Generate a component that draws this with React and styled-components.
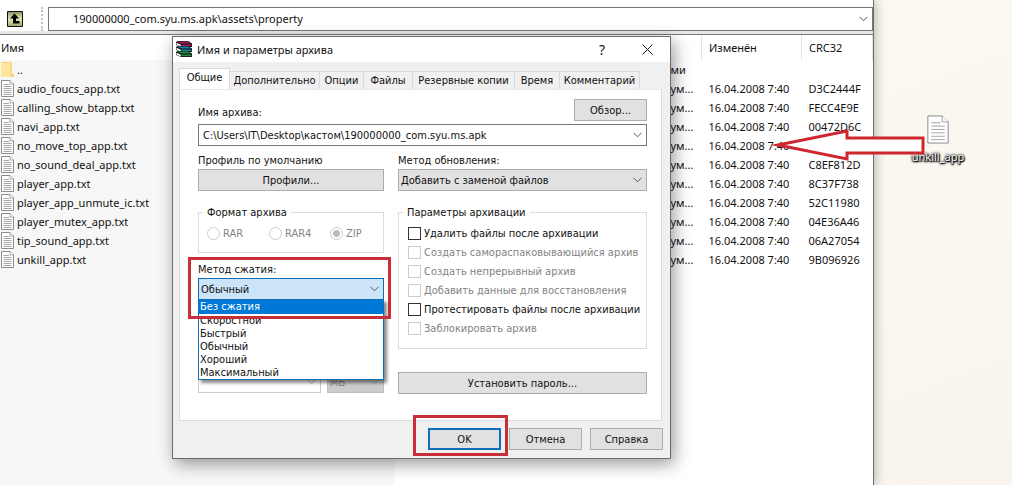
import React, { useState } from 'react';
import styled, { createGlobalStyle, css } from 'styled-components';

const GlobalStyle = createGlobalStyle`
  * {
    box-sizing: border-box;
  }
  body {
    margin: 0;
    color: #111;
    font-family: 'Noto Sans', 'Open Sans', sans-serif;
    font-size: 11px;
    line-height: 19px;
  }
  button,
  input,
  select {
    margin: 0;
    color: inherit;
    font: inherit;
    border-radius: 0;
  }
`;

const Desktop = styled.main`
  position: relative;
  display: grid;
  grid-template-columns: minmax(0, 1fr) 138px;
  min-height: 100vh;
  overflow: hidden;
  background: linear-gradient(160deg, #fdf9f4, #f9f5ee);
`;

const ArchiveWindow = styled.section`
  display: flex;
  flex-direction: column;
  min-width: 0;
  background: #fff;
  border-right: 1px solid #6e6e6e;
  box-shadow: 2px 0 10px rgba(0, 0, 0, 0.25);
`;

const Toolbar = styled.div`
  display: flex;
  align-items: center;
  height: 35px;
  padding-top: 3px;
  border-bottom: 1px solid #7a7a7a;
  background: linear-gradient(#fff 31px, #e4e8e6 31px);
`;

const UpButton = styled.button`
  display: flex;
  width: 16px;
  height: 16px;
  margin-left: 7px;
  padding: 0;
  border: 0;
  background: none;
`;

const Grip = styled.span`
  height: 24px;
  margin: 0 5px 0 18px;
  border-left: 2px dotted #c4c4c4;
`;

const AddressBar = styled.div`
  display: flex;
  flex: 1;
  align-items: center;
  height: 24px;
  border: 1px solid #777;
  background: #fff;
`;

const AddressInput = styled.input`
  flex: 1;
  min-width: 0;
  padding: 0 0 0 24px;
  border: 0;
  background: none;
`;

const ChevronButton = styled.button`
  display: flex;
  align-items: center;
  justify-content: center;
  width: 17px;
  padding: 0;
  border: 0;
  background: none;
`;

const ListPane = styled.div`
  flex: 1;
  background: linear-gradient(to right, #f7f7f7 395px, #fff 395px);
`;

const FileTable = styled.table`
  width: 100%;
  table-layout: fixed;
  border-collapse: collapse;

  th {
    height: 25px;
    padding: 0 0 0 7px;
    background: #fff;
    border-right: 1px solid #e2e2e2;
    font-weight: 400;
    text-align: left;
  }
  th:first-child {
    padding-left: 1px;
  }
  td {
    height: 19px;
    padding: 0 0 0 7px;
    white-space: nowrap;
    overflow: hidden;
  }
  td:first-child {
    padding-left: 1px;
  }
  td:nth-child(3) {
    padding-left: 0;
  }
`;

const FileName = styled.span`
  display: flex;
  align-items: center;
  gap: 3px;
  height: 19px;
`;

const DesktopFile = styled.figure`
  display: flex;
  flex-direction: column;
  align-items: center;
  gap: 3px;
  margin: 115px 10px 0 0;
`;

const DesktopLabel = styled.figcaption`
  color: #fff;
  text-shadow: 0 0 2px #000, 1px 1px 1px #000, 0 0 3px #000, 0 1px 2px #000;
`;

const ArrowMark = styled.svg`
  position: absolute;
  top: 126px;
  right: 86px;
`;

const Dialog = styled.section`
  position: absolute;
  top: 36px;
  left: 172px;
  width: 499px;
  border: 1px solid #6b6b6b;
  background: #f0f0f0;
  box-shadow: 3px 5px 16px rgba(0, 0, 0, 0.4);
  font-family: 'DejaVu Sans Condensed', 'DejaVu Sans', sans-serif;
  font-size: 11px;
  line-height: 13px;
`;

const TitleBar = styled.header`
  display: flex;
  align-items: center;
  height: 25px;
  padding: 0 13px 1px 3px;
  background: #fff;
  font-family: 'Noto Sans', 'Open Sans', sans-serif;
`;

const Title = styled.h1`
  flex: 1;
  margin: 0 0 0 5px;
  font-size: 11px;
  font-weight: 400;
`;

const TitleButton = styled.button`
  display: flex;
  align-items: center;
  justify-content: center;
  width: 20px;
  height: 20px;
  margin-left: 25px;
  padding: 0;
  border: 0;
  background: none;
  font-size: 14px;
`;

const Tabs = styled.div`
  display: flex;
  align-items: flex-end;
  height: 27px;
  padding: 0 6px;
`;

const Tab = styled.button`
  flex: 0 0 ${props => props.$width};
  height: ${props => (props.$active ? '21px' : '18px')};
  padding: ${props => (props.$active ? '0 0 3px' : '0')};
  border: 1px solid #dadada;
  border-bottom: 0;
  border-left-width: ${props => (props.$active ? '1px' : '0')};
  background: ${props => (props.$active ? '#fff' : '#f0f0f0')};
  white-space: nowrap;
`;

const Page = styled.div`
  margin: 0 8px 0 6px;
  padding: 9px 14px 26px 18px;
  border: 1px solid #dcdcdc;
  border-top-color: #e8e8e8;
  background: #fff;
`;

const NameRow = styled.div`
  display: flex;
  align-items: flex-end;
  justify-content: space-between;
  margin-bottom: 3px;
`;

const PushButton = styled.button`
  width: ${props => props.$width || '73px'};
  height: 22px;
  padding: 0;
  border: ${props => (props.$primary ? '2px solid #0f6fb5' : '1px solid #adadad')};
  background: #e1e1e1;
`;

const ComboBox = styled.div`
  display: flex;
  height: 22px;
  border: 1px solid ${props => (props.$disabled ? '#ccc' : '#777')};
  background: #fff;
`;

const ComboInput = styled.input`
  flex: 1;
  min-width: 0;
  padding: 0 4px;
  border: 0;
  background: none;
`;

const Columns = styled.div`
  display: grid;
  grid-template-columns: 186px minmax(0, 1fr);
  column-gap: 14px;
  margin-top: 8px;
`;

const Column = styled.div`
  display: flex;
  flex-direction: column;
`;

const FieldLabel = styled.label`
  display: block;
  height: 13px;
  margin-bottom: 2px;
`;

const SelectWrap = styled.div`
  position: relative;
  flex: none;
  width: ${props => props.$width || '100%'};

  > svg {
    position: absolute;
    top: 8px;
    right: 5px;
    pointer-events: none;
  }
`;

const Select = styled.select`
  display: block;
  width: 100%;
  height: 22px;
  padding: 0 2px;
  appearance: none;
  border: 1px solid #adadad;
  background: #e1e1e1;
  opacity: 1;

  ${props =>
    props.$open &&
    css`
      border-color: #0f6fb5;
      background: #cce4f7;
    `}
  &:disabled {
    border-color: #bfbfbf;
    background: #ccc;
    color: #838383;
  }
`;

const Group = styled.fieldset`
  min-width: 0;
  height: ${props => props.$height};
  margin: 15px 0 0;
  padding: 0 8px;
  border: 1px solid #dcdcdc;

  legend {
    margin-left: -4px;
    padding: 0 4px;
  }
`;

const FormatRow = styled.div`
  display: grid;
  grid-template-columns: 62px 61px auto;
  padding-top: 7px;
`;

const Option = styled.label`
  display: flex;
  align-items: center;
  gap: 3px;
  height: ${props => props.$height || '14px'};
  color: ${props => (props.$disabled ? '#838383' : 'inherit')};
  white-space: nowrap;
`;

const Radio = styled.input`
  width: 13px;
  height: 13px;
  margin: 0;
  appearance: none;
  border: 1px solid #ccc;
  border-radius: 50%;
  background: ${props =>
    props.checked ? 'radial-gradient(circle, #bbb 3px, #fff 4px)' : '#fff'};
`;

const Checkbox = styled.input`
  flex: none;
  width: 13px;
  height: 13px;
  margin: 0;
  appearance: none;
  border: 1px solid #333;
  background: #fff;

  &:checked {
    background: #555;
    box-shadow: inset 0 0 0 2px #fff;
  }
  &:disabled {
    border-color: #ccc;
  }
`;

const OptionList = styled.div`
  padding: 5px 0 0 1px;
`;

const Compression = styled.div`
  position: relative;
  margin-top: 10px;
`;

const DropList = styled.ul`
  position: absolute;
  z-index: 1;
  top: 36px;
  left: 0;
  right: 0;
  margin: 0;
  padding: 0;
  border: 1px solid #0f6fb5;
  background: #fff;
  box-shadow: 3px 3px 3px rgba(0, 0, 0, 0.45);
  list-style: none;
`;

const DropItem = styled.li`
  height: 13px;
  padding-left: 1px;
  background: ${props => (props.$selected ? '#0078d7' : '#fff')};
  color: ${props => (props.$selected ? '#fff' : 'inherit')};

  &:first-child {
    height: 14px;
  }
`;

const RedFrame = styled.span`
  position: absolute;
  z-index: 2;
  inset: ${props => props.$inset};
  border: 3px solid #c62f37;
  pointer-events: none;
`;

const VolumeRow = styled.div`
  display: flex;
  gap: 6px;
  margin-top: 71px;

  > ${ComboBox} {
    flex: 1;
    min-width: 0;
  }
`;

const PasswordRow = styled.div`
  display: flex;
  margin-top: 23px;
`;

const Footer = styled.footer`
  display: flex;
  justify-content: flex-end;
  gap: 8px;
  padding: 7px 7px 8px;
`;

const OkWrap = styled.div`
  position: relative;
`;

const Chevron = ({ color = '#555' }) => (
  <svg width="9" height="6" viewBox="0 0 9 6" fill="none" stroke={color}>
    <path d="M0.5 0.8L4.5 4.8L8.5 0.8" />
  </svg>
);

const TextFileIcon = ({ width = 13, height = 17 }) => (
  <svg width={width} height={height} viewBox="0 0 13 17" fill="#fff" stroke="#8c8c8c">
    <path d="M0.5 0.5H9L12.5 4V16.5H0.5Z" strokeWidth={13 / width} />
    <path
      d="M9 0.5V4H12.5M2.5 4.5H8M2.5 6.5H10.5M2.5 8.5H10.5M2.5 10.5H10.5M2.5 12.5H10.5M2.5 14.5H10.5"
      strokeWidth={10 / width}
    />
  </svg>
);

const FolderIcon = () => (
  <svg width="13" height="17" viewBox="0 0 13 17">
    <path d="M0 1H11V12L13 13V16H0Z" fill="#f5d778" />
    <path d="M0 2H9.500V16H0Z" fill="#ffe69c" />
  </svg>
);

const UpIcon = () => (
  <svg width="16" height="16" viewBox="0 0 16 16">
    <defs>
      <linearGradient id="up-face" x1="0" y1="0" x2="0" y2="1">
        <stop offset="0" stopColor="#8e8e55" />
        <stop offset="0.5" stopColor="#e6e6bd" />
        <stop offset="1" stopColor="#a3a368" />
      </linearGradient>
    </defs>
    <path d="M0.5 0.5H15.5V15.5H0.5Z" fill="url(#up-face)" stroke="#111" />
    <path d="M7.500 2.500L3 7.500H6V12.500H12.500V10H9V7.500H12Z" fill="#000" />
  </svg>
);

const books = [
  { y: 0, color: '#a3195f' },
  { y: 5, color: '#187f9c' },
  { y: 10, color: '#1d8a46' },
];

const BooksIcon = () => (
  <svg width="16" height="16" viewBox="0 0 16 16">
    {books.map(book => (
      <g key={book.y} transform={`translate(0 ${book.y})`}>
        <path d="M0 1L2 0H12L16 2.500V6H5L0 4Z" fill="#111" />
        <path d="M1.500 1L3 0.500H12L15 2.500H5Z" fill={book.color} />
        <path d="M5.500 3.500H15.500V5.200H5.500Z" fill={book.color} />
        <path d="M0.500 1.800L4.800 3.700V5.500L0.500 3.700Z" fill="#fff" />
      </g>
    ))}
  </svg>
);

const files = [
  { name: 'audio_foucs_app.txt', crc: 'D3C2444F' },
  { name: 'calling_show_btapp.txt', crc: 'FECC4E9E' },
  { name: 'navi_app.txt', crc: '00472D6C' },
  { name: 'no_move_top_app.txt', crc: '' },
  { name: 'no_sound_deal_app.txt', crc: 'C8EF812D' },
  { name: 'player_app.txt', crc: '8C37F738' },
  { name: 'player_app_unmute_ic.txt', crc: '52C11980' },
  { name: 'player_mutex_app.txt', crc: '04E36A46' },
  { name: 'tip_sound_app.txt', crc: '06A27054' },
  { name: 'unkill_app.txt', crc: '9B096926' },
];

const tabs = [
  { label: 'Общие', width: '51px' },
  { label: 'Дополнительно', width: '90px' },
  { label: 'Опции', width: '44px' },
  { label: 'Файлы', width: '49px' },
  { label: 'Резервные копии', width: '102px' },
  { label: 'Время', width: '45px' },
  { label: 'Комментарий', width: '80px' },
];

const methods = ['Без сжатия', 'Скоростной', 'Быстрый', 'Обычный', 'Хороший', 'Максимальный'];

const archiveOptions = [
  { label: 'Удалить файлы после архивации' },
  { label: 'Создать самораспаковывающийся архив', disabled: true },
  { label: 'Создать непрерывный архив', disabled: true },
  { label: 'Добавить данные для восстановления', disabled: true },
  { label: 'Протестировать файлы после архивации' },
  { label: 'Заблокировать архив', disabled: true },
];

const FileList = () => (
  <ListPane>
    <FileTable>
      <colgroup>
        <col style={{ width: 395 }} />
        <col />
        <col style={{ width: 31 }} />
        <col style={{ width: 100 }} />
        <col style={{ width: 71 }} />
      </colgroup>
      <thead>
        <tr>
          <th>Имя</th>
          <th />
          <th />
          <th>Изменён</th>
          <th>CRC32</th>
        </tr>
      </thead>
      <tbody>
        <tr>
          <td>
            <FileName>
              <FolderIcon />..
            </FileName>
          </td>
          <td />
          <td>ми</td>
          <td />
          <td />
        </tr>
        {files.map(file => (
          <tr key={file.name}>
            <td>
              <FileName>
                <TextFileIcon />
                {file.name}
              </FileName>
            </td>
            <td />
            <td>ум...</td>
            <td>16.04.2008 7:40</td>
            <td>{file.crc}</td>
          </tr>
        ))}
      </tbody>
    </FileTable>
  </ListPane>
);

const ArchiveDialog = () => {
  const [method, setMethod] = useState('Обычный');
  const [hovered, setHovered] = useState('Без сжатия');

  return (
    <Dialog role="dialog" aria-labelledby="dialog-title">
      <TitleBar>
        <BooksIcon />
        <Title id="dialog-title">Имя и параметры архива</Title>
        <TitleButton>?</TitleButton>
        <TitleButton aria-label="Закрыть">
          <svg width="11" height="11" viewBox="0 0 11 11" stroke="#111">
            <path d="M0.5 0.5L10.5 10.5M10.5 0.5L0.5 10.5" />
          </svg>
        </TitleButton>
      </TitleBar>
      <Tabs role="tablist">
        {tabs.map((tab, i) => (
          <Tab key={tab.label} role="tab" $width={tab.width} $active={i === 0}>
            {tab.label}
          </Tab>
        ))}
      </Tabs>
      <Page>
        <NameRow>
          <FieldLabel htmlFor="archive-name">Имя архива:</FieldLabel>
          <PushButton>Обзор...</PushButton>
        </NameRow>
        <ComboBox>
          <ComboInput
            id="archive-name"
            defaultValue="C:\Users\IT\Desktop\кастом\190000000_com.syu.ms.apk"
          />
          <ChevronButton aria-label="Недавние архивы">
            <Chevron />
          </ChevronButton>
        </ComboBox>
        <Columns>
          <Column>
            <FieldLabel as="span">Профиль по умолчанию</FieldLabel>
            <PushButton $width="100%">Профили...</PushButton>
            <Group $height="47px">
              <legend>Формат архива</legend>
              <FormatRow>
                {['RAR', 'RAR4', 'ZIP'].map(format => (
                  <Option key={format} $disabled>
                    <Radio
                      type="radio"
                      name="format"
                      checked={format === 'ZIP'}
                      readOnly
                      disabled
                    />
                    {format}
                  </Option>
                ))}
              </FormatRow>
            </Group>
            <Compression>
              <FieldLabel htmlFor="method">Метод сжатия:</FieldLabel>
              <SelectWrap>
                <Select
                  id="method"
                  $open
                  value={method}
                  onChange={e => setMethod(e.target.value)}
                >
                  {methods.map(name => (
                    <option key={name}>{name}</option>
                  ))}
                </Select>
                <Chevron />
              </SelectWrap>
              <DropList role="listbox">
                {methods.map(name => (
                  <DropItem
                    key={name}
                    role="option"
                    aria-selected={name === hovered}
                    $selected={name === hovered}
                    onMouseEnter={() => setHovered(name)}
                    onClick={() => setMethod(name)}
                  >
                    {name}
                  </DropItem>
                ))}
              </DropList>
              <RedFrame $inset="-6px -7px -19px -10px" />
            </Compression>
            <VolumeRow>
              <ComboBox $disabled>
                <ComboInput aria-label="Размер тома" disabled />
                <ChevronButton disabled aria-label="Размеры">
                  <Chevron color="#bbb" />
                </ChevronButton>
              </ComboBox>
              <SelectWrap $width="57px">
                <Select disabled aria-label="Единицы">
                  <option>МБ</option>
                </Select>
                <Chevron color="#aaa" />
              </SelectWrap>
            </VolumeRow>
          </Column>
          <Column>
            <FieldLabel htmlFor="update">Метод обновления:</FieldLabel>
            <SelectWrap>
              <Select id="update">
                <option>Добавить с заменой файлов</option>
              </Select>
              <Chevron />
            </SelectWrap>
            <Group $height="143px">
              <legend>Параметры архивации</legend>
              <OptionList>
                {archiveOptions.map(option => (
                  <Option key={option.label} $height="19px" $disabled={option.disabled}>
                    <Checkbox type="checkbox" disabled={option.disabled} />
                    {option.label}
                  </Option>
                ))}
              </OptionList>
            </Group>
            <PasswordRow>
              <PushButton $width="100%">Установить пароль...</PushButton>
            </PasswordRow>
          </Column>
        </Columns>
      </Page>
      <Footer>
        <OkWrap>
          <PushButton $primary>OK</PushButton>
          <RedFrame $inset="-13px -7px -6px -15px" />
        </OkWrap>
        <PushButton>Отмена</PushButton>
        <PushButton>Справка</PushButton>
      </Footer>
    </Dialog>
  );
};

const App = () => {
  return (
    <>
      <GlobalStyle />
      <Desktop>
        <ArchiveWindow>
          <Toolbar>
            <UpButton aria-label="Вверх">
              <UpIcon />
            </UpButton>
            <Grip />
            <AddressBar>
              <AddressInput
                aria-label="Путь"
                defaultValue="190000000_com.syu.ms.apk\assets\property"
              />
              <ChevronButton aria-label="История">
                <Chevron />
              </ChevronButton>
            </AddressBar>
          </Toolbar>
          <FileList />
        </ArchiveWindow>
        <DesktopFile>
          <TextFileIcon width={22} height={29} />
          <DesktopLabel>unkill_app</DesktopLabel>
        </DesktopFile>
        <ArrowMark width="156" height="38" viewBox="0 0 156 38">
          <path
            d="M8 19L77 5V12H153V27H77V33Z"
            fill="#fff"
            stroke="#d0262e"
            strokeWidth="3"
            strokeMiterlimit="8"
          />
        </ArrowMark>
        <ArchiveDialog />
      </Desktop>
    </>
  );
};

export default App;
